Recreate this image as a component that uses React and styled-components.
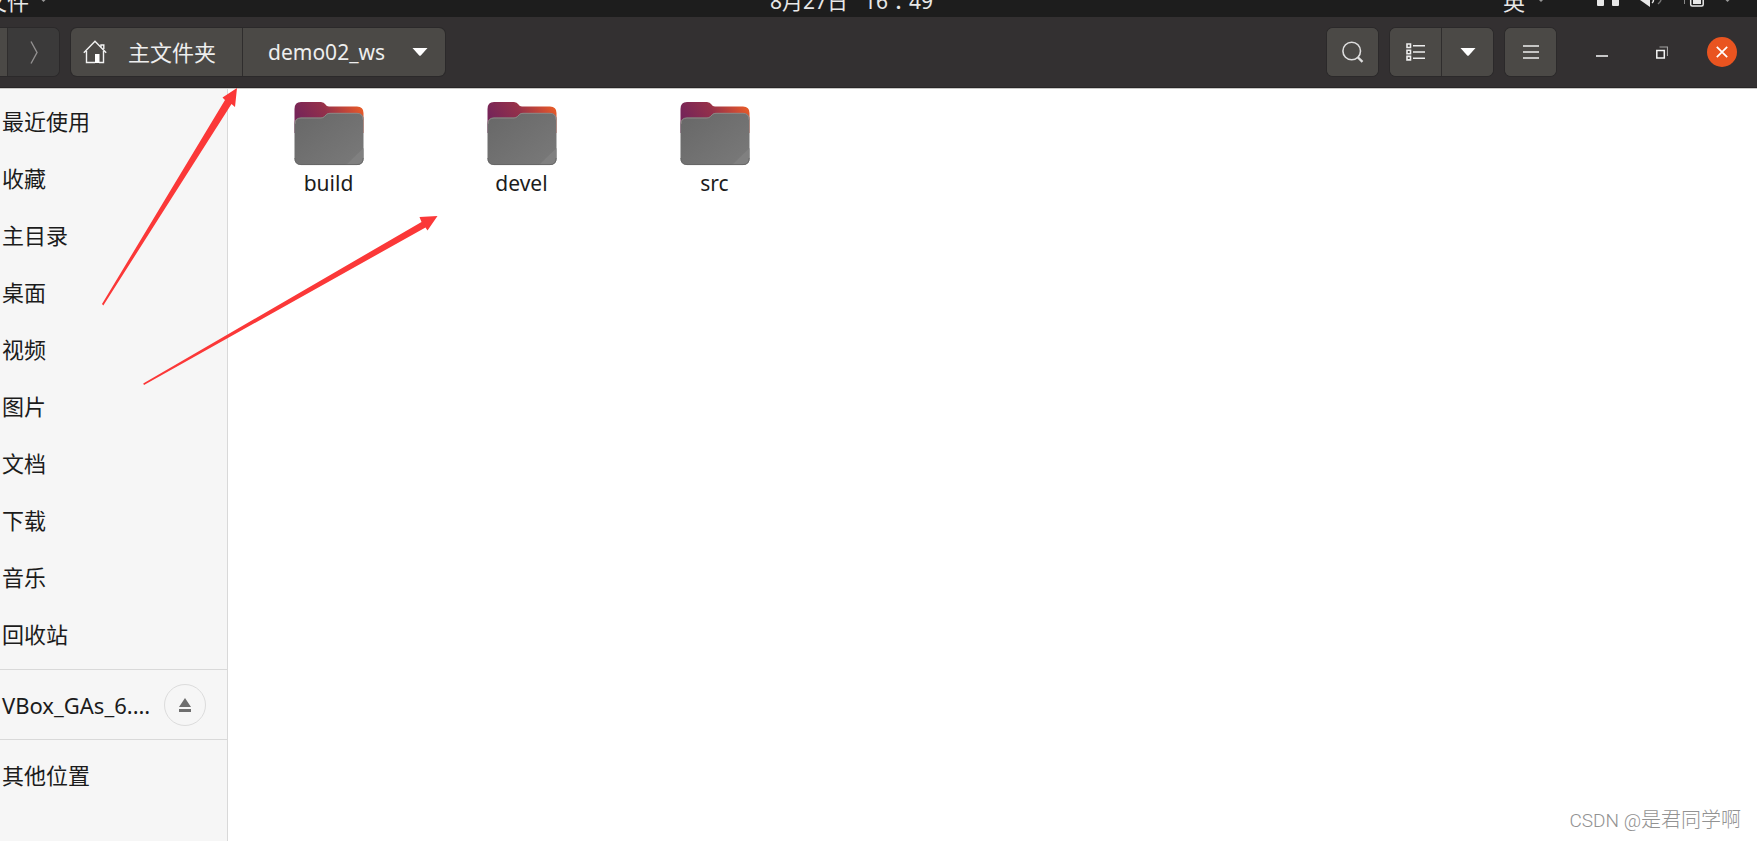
import React from 'react';
import styled, { createGlobalStyle } from 'styled-components';

const GlobalStyle = createGlobalStyle`
  * {
    box-sizing: border-box;
  }
  body {
    margin: 0;
    background: #fff;
    color: #1c1c1c;
    font: 21px/30px 'Noto Sans', 'Noto Sans CJK SC', sans-serif;
  }
  button {
    font: inherit;
    color: inherit;
    border: none;
    padding: 0;
    background: none;
  }
  a {
    color: inherit;
    text-decoration: none;
  }
  svg {
    display: block;
    flex: none;
  }
`;

const Window = styled.div`
  position: relative;
  display: flex;
  flex-direction: column;
  min-height: 100vh;
  overflow: hidden;
`;

const TopBar = styled.div`
  display: grid;
  grid-template-columns: 1fr auto 1fr;
  align-items: end;
  align-content: end;
  height: 17px;
  overflow: hidden;
  background: #1d1d1d;
  color: #e8e8e8;
  line-height: 32px;
`;

const AppMenu = styled.div`
  display: flex;
  align-items: flex-end;
  gap: 12px;
  margin-left: -15px;
  font-size: 22px;
`;

const Clock = styled.time`
  display: flex;
  gap: 16px;
  margin-right: 54px;
  font-family: 'Noto Sans', 'Noto Sans CJK TC', sans-serif;
`;

const Tray = styled.div`
  display: flex;
  align-items: flex-end;
  justify-content: flex-end;
  padding-right: 26px;
  font-size: 22px;
`;

const HeaderBar = styled.header`
  display: flex;
  align-items: center;
  justify-content: space-between;
  height: 72px;
  padding: 0 5px 1px 0;
  border-bottom: 1px solid #c9c7c5;
  background: #333031;
  box-shadow: inset 0 -1px #272526;
  color: #eee;
`;

const Group = styled.div`
  display: flex;
  align-items: center;
  gap: ${(props) => props.$gap || 0}px;
`;

const Linked = styled.div`
  display: flex;
  height: 48px;
  border-radius: ${(props) => (props.$cut ? '0 6px 6px 0' : '6px')};
  background: ${(props) => (props.$cut ? '#3b3a3a' : '#4b4946')};
  box-shadow: 0 0 0 1px #2b292a;
  overflow: hidden;
`;

const ToolButton = styled.button`
  display: flex;
  align-items: center;
  justify-content: center;
  width: ${(props) => props.$width || 51}px;
  color: ${(props) => (props.$dim ? '#929090' : '#eee')};
  background: ${(props) => (props.$dim ? '#3b3a3a' : '#4b4946')};
  & + & {
    width: 52px;
    border-left: 1px solid #2f2d2d;
  }
`;

const PathButton = styled.button`
  display: flex;
  align-items: center;
  gap: ${(props) => (props.$home ? '21px' : '27px')};
  padding: ${(props) => (props.$home ? '0 26px 0 12px' : '0 17px 0 25px')};
  font-size: ${(props) => (props.$home ? '22px' : '21px')};
  & + & {
    border-left: 1px solid #2f2d2d;
  }
`;

const WindowControls = styled.div`
  display: flex;
  margin-left: 4px;
`;

const WindowButton = styled.button`
  display: flex;
  align-items: center;
  justify-content: center;
  width: 60px;
  height: 48px;
`;

const CloseDisc = styled.span`
  display: flex;
  align-items: center;
  justify-content: center;
  width: 30px;
  height: 30px;
  border-radius: 50%;
  background: #e95420;
`;

const Body = styled.div`
  display: flex;
  flex: 1;
`;

const Sidebar = styled.nav`
  flex: none;
  width: 228px;
  border-right: 1px solid #d9d9d9;
  background: #f6f6f6;
`;

const Places = styled.ul`
  margin: 0;
  padding: ${(props) => props.$pad}px 0;
  list-style: none;
  & + & {
    border-top: 1px solid #d9d9d9;
  }
`;

const Place = styled.li`
  display: flex;
  align-items: center;
  height: 57px;
  padding: ${(props) => (props.$volume ? '0 0 0 2px' : '0 0 4px 2px')};
  font-size: 22px;
`;

const EjectButton = styled.button`
  display: flex;
  align-items: center;
  justify-content: center;
  width: 42px;
  height: 42px;
  margin: 0 21px 0 auto;
  border: 1px solid #dcdcdc;
  border-radius: 50%;
`;

const Files = styled.main`
  display: flex;
  flex: 1;
  flex-wrap: wrap;
  align-content: flex-start;
  padding: 13px 4px;
`;

const FileItem = styled.a`
  display: flex;
  flex-direction: column;
  align-items: center;
  width: 193px;
  gap: 2px;
`;

const Annotations = styled.svg`
  position: absolute;
  top: 0;
  left: 0;
  pointer-events: none;
`;

const Watermark = styled.div`
  position: absolute;
  right: 16px;
  bottom: 5px;
  color: #929292;
  font: 300 20px/30px Roboto, 'Noto Sans CJK SC', sans-serif;
`;

const Site = styled.span`
  font-size: 19px;
`;

const places = [
  '最近使用',
  '收藏',
  '主目录',
  '桌面',
  '视频',
  '图片',
  '文档',
  '下载',
  '音乐',
  '回收站',
];

const folders = ['build', 'devel', 'src'];

const Caret = () => (
  <svg width="16" height="8" viewBox="0 0 16 8">
    <path d="M0.5 0h15L8.8 7.4q-.8.7-1.6 0z" fill="#fff" />
  </svg>
);

const TinyCaret = () => (
  <svg width="6" height="17" viewBox="0 0 6 17">
    <path d="M0.5 0h4L2.5 2z" fill="#999" />
  </svg>
);

const TrayIcons = () => (
  <svg width="200" height="17" viewBox="0 0 200 17" fill="#e8e8e8">
    <path d="M14 0h4l-2 2z" opacity=".6" />
    <path d="M72 0h7v5q0 1-1 1h-5q-1 0-1-1zM87 0h7v5q0 1-1 1h-5q-1 0-1-1z" />
    <path d="M115 0h10v7z" />
    <path d="M128.500 0q0 2-1.500 3" fill="none" stroke="#e8e8e8" strokeWidth="1.500" />
    <path d="M136 0q-.5 2-3 4" fill="none" stroke="#777" strokeWidth="1.500" />
    <path d="M159.500 0v4" stroke="#888" />
    <path d="M165.700 -4v8.500q0 1.500 1.500 1.500h9.500q1.500 0 1.500-1.500v-8.500" fill="none" stroke="#e8e8e8" strokeWidth="1.500" />
    <path d="M168 0h8v4h-8z" />
  </svg>
);

const HomeIcon = () => (
  <svg width="24" height="24" viewBox="0 0 24 24" fill="none" stroke="#f2f2f2" strokeWidth="1.400">
    <path d="M0.800 12.800 12 1.200l11.200 11.600M3.500 11v11.500H12M20.500 11v11.500H16M18 7V5h2.800v4" />
    <path d="M12 14h4.500v9H12z" fill="#fff" stroke="none" />
  </svg>
);

const SearchIcon = () => (
  <svg width="22" height="22" viewBox="0 0 22 22" fill="none" stroke="#ddd">
    <circle cx="9.700" cy="10" r="8.800" strokeWidth="1.600" />
    <path d="m15.500 16 5 4.800" strokeWidth="2.400" />
  </svg>
);

const ListIcon = () => (
  <svg width="19" height="18" viewBox="0 0 19 18" fill="none" stroke="#eee">
    <path d="M1 1h3.500v3.500H1zM1 7.200h3.500v3.500H1zM1 13.400h3.500v3.500H1z" strokeWidth="1.600" />
    <path d="M7 2.700h12M7 9h12M7 15.200h12" strokeWidth="1.600" />
  </svg>
);

const FolderIcon = () => (
  <svg width="70" height="64" viewBox="0 0 70 64">
    <defs>
      <linearGradient id="folder-back" x1="0" y1=".3" x2="1" y2="0">
        <stop offset="0" stopColor="#762558" />
        <stop offset=".42" stopColor="#94304a" />
        <stop offset=".75" stopColor="#cc4a35" />
        <stop offset="1" stopColor="#f26322" />
      </linearGradient>
      <linearGradient id="folder-front" x1="0" y1="0" x2="1" y2="1">
        <stop offset="0" stopColor="#676767" />
        <stop offset="1" stopColor="#7a7a7a" />
      </linearGradient>
    </defs>
    <path d="M.5 7Q.5 0 7 0h20q3 0 4.500 2.500Q32.500 4.500 35 4.500h28q6.500 0 6.500 6.500v20H.5z" fill="url(#folder-back)" />
    <path d="M.5 22q0-6.500 6.500-6.500h20q2 0 3.300-1.300l2.200-2.200Q34 11 36 11h27q6.500 0 6.500 6.500V56q0 7-6.500 7H7q-6.500 0-6.500-7z" fill="url(#folder-front)" />
    <path d="M1 22q0-6 6-6h20q2 0 3.500-1.500l2.200-2.200q1.300-1 3.300-1h27q6 0 6 6.500" fill="none" stroke="#8f8785" />
    <path d="M69.500 46v10q0 7-6.500 7H52z" fill="#808080" />
    <path d="M.8 56q0 6.600 6.200 6.600h56q6.200 0 6.200-6.600" fill="none" stroke="#626262" strokeWidth=".8" />
  </svg>
);

const App = () => {
  return (
    <>
      <GlobalStyle />
      <Window>
        <TopBar>
          <AppMenu>
            <span>文件</span>
            <TinyCaret />
          </AppMenu>
          <Clock>
            <span>8月27日</span>
            <span>16：49</span>
          </Clock>
          <Tray>
            <span>英</span>
            <TrayIcons />
            <TinyCaret />
          </Tray>
        </TopBar>

        <HeaderBar>
          <Group $gap={12}>
            <Linked $cut>
              <ToolButton $width={7} aria-label="后退" />
              <ToolButton $dim aria-label="前进">
                <svg width="8" height="23" viewBox="0 0 8 23" fill="none" stroke="currentColor" strokeWidth="1.400">
                  <path d="m1 .5 6 11-6 11" />
                </svg>
              </ToolButton>
            </Linked>
            <Linked>
              <PathButton $home>
                <HomeIcon />
                主文件夹
              </PathButton>
              <PathButton>
                demo02_ws
                <Caret />
              </PathButton>
            </Linked>
          </Group>

          <Group $gap={12}>
            <Linked>
              <ToolButton aria-label="搜索">
                <SearchIcon />
              </ToolButton>
            </Linked>
            <Linked>
              <ToolButton aria-label="列表视图">
                <ListIcon />
              </ToolButton>
              <ToolButton aria-label="视图选项">
                <Caret />
              </ToolButton>
            </Linked>
            <Linked>
              <ToolButton aria-label="菜单">
                <svg width="16" height="16" viewBox="0 0 16 16" stroke="#eee" strokeWidth="1.600">
                  <path d="M0 2h16M0 8h16M0 14h16" />
                </svg>
              </ToolButton>
            </Linked>
            <WindowControls>
              <WindowButton aria-label="最小化">
                <svg width="12" height="12" viewBox="0 0 12 12">
                  <path d="M0 10h12" stroke="#eee" strokeWidth="1.600" />
                </svg>
              </WindowButton>
              <WindowButton aria-label="还原">
                <svg width="12" height="13" viewBox="0 0 12 13" fill="none">
                  <path d="M3.500 1h8v9" stroke="#a5a3a3" strokeWidth="1.200" />
                  <path d="M.8 4.500h7.500V12H.8z" stroke="#f4f4f4" strokeWidth="1.500" />
                </svg>
              </WindowButton>
              <WindowButton aria-label="关闭">
                <CloseDisc>
                  <svg width="12" height="12" viewBox="0 0 12 12">
                    <path d="m.8.8 10.400 10.400M11.200.8.8 11.200" stroke="#fff" strokeWidth="1.700" />
                  </svg>
                </CloseDisc>
              </WindowButton>
            </WindowControls>
          </Group>
        </HeaderBar>

        <Body>
          <Sidebar>
            <Places $pad={5}>
              {places.map((name) => (
                <Place key={name}>
                  <a href="#">{name}</a>
                </Place>
              ))}
            </Places>
            <Places $pad={6}>
              <Place $volume>
                <a href="#">VBox_GAs_6.…</a>
                <EjectButton aria-label="弹出">
                  <svg width="12" height="14" viewBox="0 0 12 14" fill="#6e6e6e">
                    <path d="M6 0l6 9H0zM0 11h12v3H0z" />
                  </svg>
                </EjectButton>
              </Place>
            </Places>
            <Places $pad={8}>
              <Place>
                <a href="#">其他位置</a>
              </Place>
            </Places>
          </Sidebar>
          <Files>
            {folders.map((name) => (
              <FileItem href="#" key={name}>
                <FolderIcon />
                <span>{name}</span>
              </FileItem>
            ))}
          </Files>
        </Body>

        <Annotations width="440" height="390" viewBox="0 0 440 390" fill="#fb3838">
          <path d="M102 304 225 100l-2.500-2.500L237 88l-2 19-3.500-3L103.300 305.500z" />
          <path d="M143.200 383.500 421.500 222l-2-5 18-1-10 14.500-2-3L144 385z" />
        </Annotations>
        <Watermark>
          <Site>CSDN @</Site>是君同学啊
        </Watermark>
      </Window>
    </>
  );
};

export default App;
